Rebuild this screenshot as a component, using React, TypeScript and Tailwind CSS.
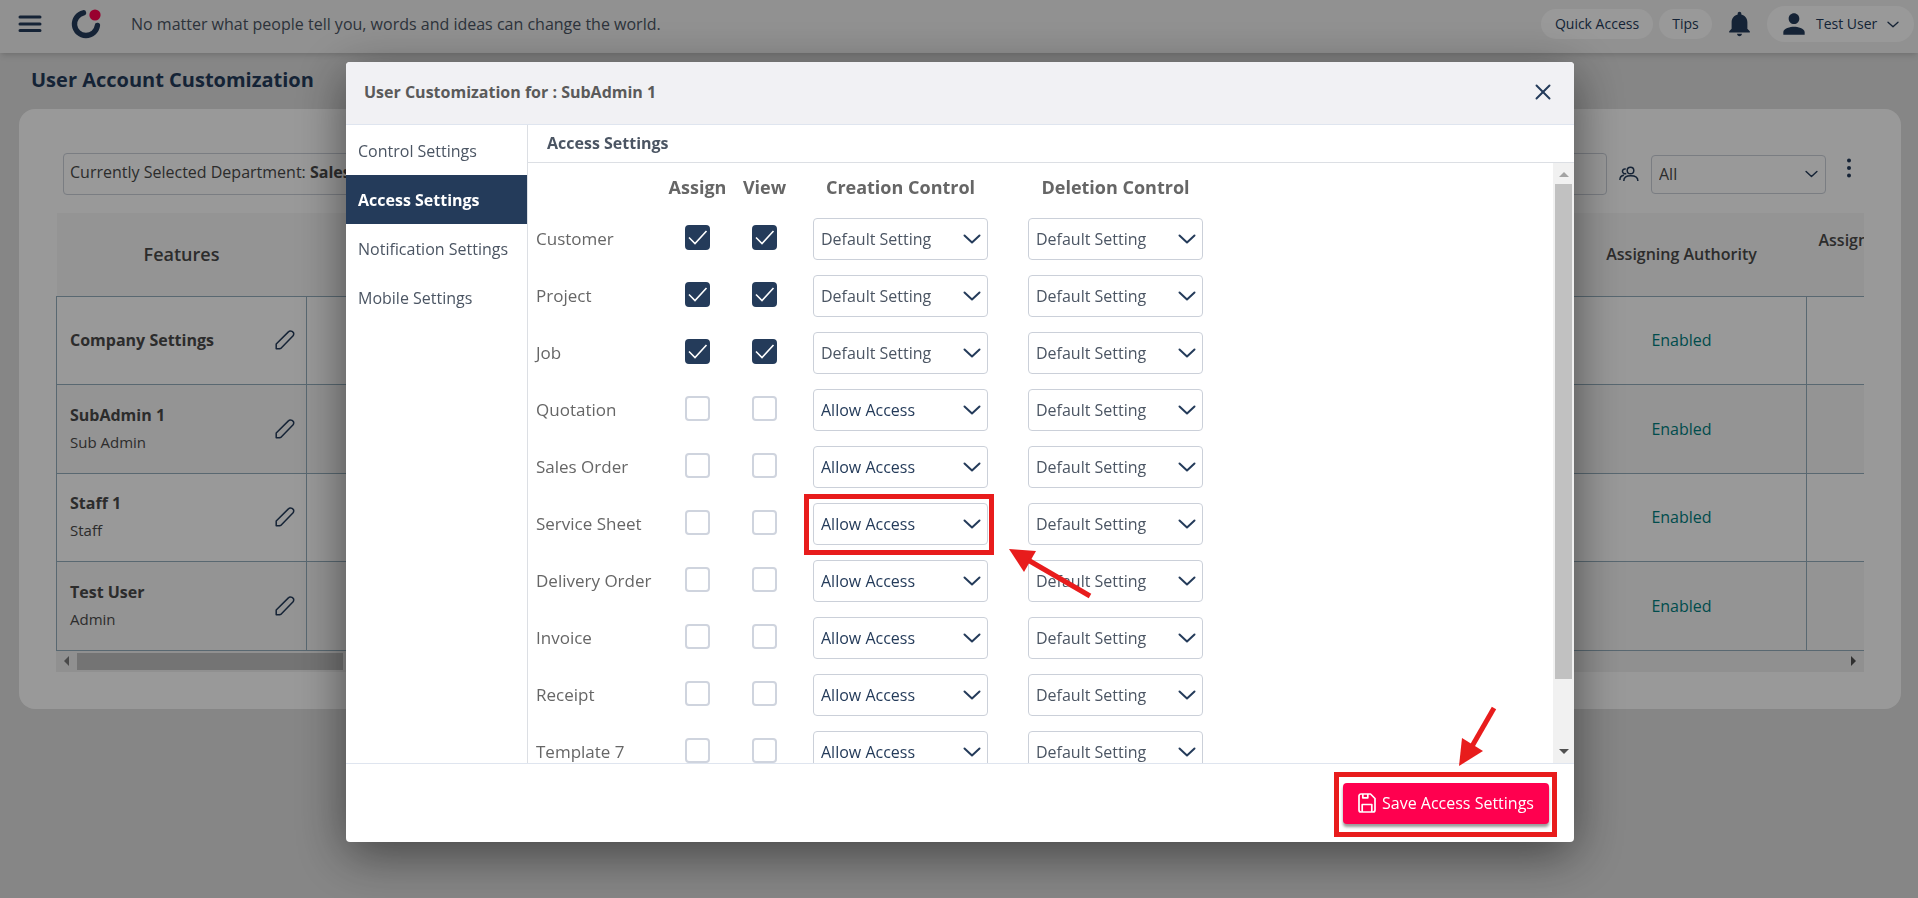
import { useState } from 'react'
import { X } from 'lucide-react'
import { MdPerson } from 'react-icons/md'
import { IoMdNotifications } from 'react-icons/io'

const tabs = ['Control Settings', 'Access Settings', 'Notification Settings', 'Mobile Settings']

const accessRows = [
  { name: 'Customer', on: true, creation: 'Default Setting' },
  { name: 'Project', on: true, creation: 'Default Setting' },
  { name: 'Job', on: true, creation: 'Default Setting' },
  { name: 'Quotation', on: false, creation: 'Allow Access' },
  { name: 'Sales Order', on: false, creation: 'Allow Access' },
  { name: 'Service Sheet', on: false, creation: 'Allow Access', marked: true },
  { name: 'Delivery Order', on: false, creation: 'Allow Access' },
  { name: 'Invoice', on: false, creation: 'Allow Access' },
  { name: 'Receipt', on: false, creation: 'Allow Access' },
  { name: 'Template 7', on: false, creation: 'Allow Access' },
]

const users = [
  { name: 'Company Settings', role: '' },
  { name: 'SubAdmin 1', role: 'Sub Admin' },
  { name: 'Staff 1', role: 'Staff' },
  { name: 'Test User', role: 'Admin' },
]

const spareColumns = [1, 2, 3, 4, 5]

function Chevron({ className }: { className: string }) {
  return (
    <svg viewBox="0 0 18 10" fill="none" stroke="currentColor" strokeWidth="2" strokeLinecap="round" strokeLinejoin="round" className={className}>
      <path d="M1.5 1.5 9 8.5l7.5-7" />
    </svg>
  )
}

function Logo() {
  return (
    <svg viewBox="0 0 30 30" className="h-[30px] w-[30px]">
      <path d="M12.5 3.8A11.5 11.5 0 1 0 26.400 16.500" fill="none" stroke="#243b5a" strokeWidth="5.4" strokeLinecap="round" />
      <circle cx="24" cy="6" r="5.6" fill="#ff004f" />
    </svg>
  )
}

function PencilIcon() {
  return (
    <svg viewBox="0 0 20 20" fill="none" stroke="currentColor" strokeWidth="1.5" strokeLinejoin="round" className="h-5 w-5">
      <path d="M1.200 18.800V14L13.400 1.900a2.600 2.600 0 0 1 1.900-.8c2.700 0 4.400 2.100 2.800 4.700L6 18.200l-1.500.6z" />
    </svg>
  )
}

function AccessSelect({ label, value }: { label: string; value: string }) {
  return (
    <div className="relative mx-auto w-[175px]">
      <select
        aria-label={label}
        defaultValue={value}
        className={`block h-[42px] w-full appearance-none rounded-sm border border-[#cbd0d9] bg-white pl-[7px] text-base ${
          value === 'Allow Access' ? 'text-[#243b5a]' : 'text-[#4b5563]'
        }`}
      >
        <option>Default Setting</option>
        <option>Allow Access</option>
        <option>Deny Access</option>
      </select>
      <Chevron className="pointer-events-none absolute top-4 right-[7px] h-[10px] w-[18px] text-[#243b5a]" />
    </div>
  )
}

function AccessCheck({ label, on }: { label: string; on: boolean }) {
  return (
    <span className="relative mx-auto mb-[2px] block h-[25px] w-[25px]">
      <input
        type="checkbox"
        aria-label={label}
        defaultChecked={on}
        className="peer block h-[25px] w-[25px] appearance-none rounded border-2 border-[#cfd4de] bg-white checked:border-[#243b5a] checked:bg-[#243b5a]"
      />
      <svg
        viewBox="0 0 25 25"
        fill="none"
        stroke="white"
        strokeWidth="1.6"
        className="pointer-events-none absolute inset-0 hidden peer-checked:block"
      >
        <path d="M4 12.5 10 18.5 21.5 6" />
      </svg>
    </span>
  )
}

function TopBar() {
  return (
    <header className="flex h-[53px] items-center bg-[#f2f2f2] pr-1 pb-[5px] pl-[18px] shadow-md">
      <button aria-label="Menu" className="mr-[29px] text-[#243b5a]">
        <svg viewBox="0 0 24 18" className="h-[18px] w-6" stroke="currentColor" strokeWidth="3" strokeLinecap="round">
          <path d="M2 2h20M2 9h20M2 15.500h20" />
        </svg>
      </button>
      <Logo />
      <p className="ml-[30px] text-base text-[#4b5563]">No matter what people tell you, words and ideas can change the world.</p>
      <div className="ml-auto flex items-center text-[#243b5a]">
        <button className="h-[30px] w-28 rounded-full bg-white text-sm">Quick Access</button>
        <button className="ml-[6px] h-[30px] w-[53px] rounded-full bg-white text-sm">Tips</button>
        <button aria-label="Notifications" className="mx-3">
          <IoMdNotifications className="h-[30px] w-[31px]" />
        </button>
        <button className="flex h-9 w-[147px] items-center rounded-full bg-white pl-[11px] text-sm">
          <MdPerson className="h-8 w-8" />
          <span className="ml-[6px]">Test User</span>
          <Chevron className="ml-[10px] h-[7px] w-3" />
        </button>
      </div>
    </header>
  )
}

function UsersTable() {
  return (
    <div className="overflow-hidden">
      <table className="w-[2001px] table-fixed border-collapse text-[#4a4a4a]">
        <thead>
          <tr className="h-[83px] border-b border-[#e8eaec] bg-[#f7f7f7]">
            <th className="text-lg font-semibold">Features</th>
            {spareColumns.map((c) => (
              <th key={c} />
            ))}
            <th className="font-semibold">Assigning Authority</th>
            <th className="pb-[28px] pl-3 text-left font-semibold">Assigning</th>
          </tr>
        </thead>
        <tbody>
          {users.map((u) => (
            <tr key={u.name} className="h-[88px] even:h-[89px] even:bg-[#f7f7f7]">
              <td className="border border-[#94aebd]">
                <div className="flex items-center justify-between pr-[11px] pl-[13px]">
                  <div className="leading-[27px]">
                    <div className="font-bold">{u.name}</div>
                    {u.role && <div className="text-[15px]">{u.role}</div>}
                  </div>
                  <button aria-label={`Edit ${u.name}`} className="text-[#243b5a]">
                    <PencilIcon />
                  </button>
                </div>
              </td>
              {spareColumns.map((c) => (
                <td key={c} className="border border-[#94aebd]" />
              ))}
              <td className="border border-[#94aebd] text-center text-[#008080]">Enabled</td>
              <td className="border border-[#94aebd]" />
            </tr>
          ))}
        </tbody>
      </table>
      <div className="flex h-[21px] items-center bg-[#f1f1f1] px-2">
        <span className="border-y-[5px] border-r-[5px] border-y-transparent border-r-[#7c7c7c]" />
        <span className="ml-2 h-[17px] w-[266px] bg-[#c1c1c1]" />
        <span className="ml-auto border-y-[5px] border-l-[5px] border-y-transparent border-l-[#505050]" />
      </div>
    </div>
  )
}

function AccountPage() {
  return (
    <main className="pr-[17px] pl-[19px]">
      <h1 className="pt-[13px] pl-3 text-xl leading-7 font-bold text-[#243b5a]">User Account Customization</h1>
      <section className="mt-[15px] rounded-2xl bg-white px-[37px] pt-11 pb-[37px]">
        <div className="mb-[18px] flex items-center pl-[7px]">
          <p className="h-[42px] flex-1 rounded border border-[#cbd0d9] pl-[6px] leading-9 text-[#4a4a4a]">
            Currently Selected Department: <b>Sales</b>
          </p>
          <svg viewBox="0 0 20 16" fill="none" stroke="#243b5a" strokeWidth="1.5" className="mr-3 ml-3 h-4 w-5">
            <circle cx="11.5" cy="4.500" r="3.300" />
            <path d="M4.800 15c0-3.200 2.200-5.200 6.900-5.200s7.200 2 7.200 5.200M6.800 3.100A2.400 2.400 0 1 0 7.200 7.300M.9 14c0-2.600 1.200-4.400 4-4.700" />
          </svg>
          <div className="relative w-[175px]">
            <select aria-label="Department filter" className="block h-[39px] w-full appearance-none rounded border border-[#cbd0d9] pl-[7px] text-[#4a4a4a]">
              <option>All</option>
            </select>
            <Chevron className="pointer-events-none absolute top-[15px] right-2 h-2 w-[13px] text-[#243b5a]" />
          </div>
          <button aria-label="More" className="mr-3 ml-5 pb-3 text-[#243b5a]">
            <svg viewBox="0 0 6 20" fill="currentColor" className="h-5 w-[6px]">
              <circle cx="3" cy="2.500" r="2" />
              <circle cx="3" cy="10" r="2" />
              <circle cx="3" cy="17.500" r="2" />
            </svg>
          </button>
        </div>
        <UsersTable />
      </section>
    </main>
  )
}

function AccessTable() {
  return (
    <table className="w-[700px] table-fixed text-[#666]">
      <colgroup>
        <col className="w-[136px]" />
        <col className="w-[67px]" />
        <col className="w-[67px]" />
        <col className="w-[205px]" />
        <col className="w-[225px]" />
      </colgroup>
      <thead>
        <tr className="h-[47px] text-lg">
          <td />
          <th>Assign</th>
          <th>View</th>
          <th>Creation Control</th>
          <th>Deletion Control</th>
        </tr>
      </thead>
      <tbody>
        {accessRows.map((r) => (
          <tr key={r.name} className="h-[57px]">
            <th scope="row" className="pl-2 text-left text-[17px] font-normal whitespace-nowrap">{r.name}</th>
            <td><AccessCheck label={`Assign ${r.name}`} on={r.on} /></td>
            <td><AccessCheck label={`View ${r.name}`} on={r.on} /></td>
            <td className="relative">
              <AccessSelect label={`${r.name} creation control`} value={r.creation} />
              {r.marked && (
                <>
                  <span className="pointer-events-none absolute top-[-1px] left-[6px] h-[61px] w-[190px] border-[5px] border-[#e81c1c]" />
                  <svg viewBox="0 0 84 50" fill="#e81c1c" className="pointer-events-none absolute top-[54px] left-[210px] z-10 h-[50px] w-[84px]">
                    <path d="M1 0 28 2 16 23z" />
                    <path d="M20 11 82 47" stroke="#e81c1c" strokeWidth="5" />
                  </svg>
                </>
              )}
            </td>
            <td><AccessSelect label={`${r.name} deletion control`} value="Default Setting" /></td>
          </tr>
        ))}
      </tbody>
    </table>
  )
}

function CustomizationDialog() {
  const [tab, setTab] = useState('Access Settings')

  return (
    <div role="dialog" aria-label="User Customization" className="flex h-full w-full max-w-[1228px] flex-col rounded bg-white shadow-[0_12px_50px_rgba(0,0,0,0.5)]">
      <div className="flex h-[63px] shrink-0 items-center justify-between rounded-t border-b border-[#dfe5ef] bg-[#f1f1f4] pr-[18px] pb-[2px] pl-[18px]">
        <h2 className="font-bold text-[#5a5a5a]">User Customization for : SubAdmin 1</h2>
        <button aria-label="Close" className="text-[#243b5a]">
          <X size={26} strokeWidth={1.8} />
        </button>
      </div>

      <div className="flex min-h-0 flex-1">
        <nav className="flex w-[182px] shrink-0 flex-col border-r border-[#dcdfe4] pt-px">
          {tabs.map((t) => (
            <button
              key={t}
              onClick={() => setTab(t)}
              className={`h-[49px] pl-3 text-left text-base whitespace-nowrap ${
                t === tab ? 'bg-[#243b5a] font-bold text-white' : 'text-[#4b5563]'
              }`}
            >
              {t}
            </button>
          ))}
        </nav>

        <div className="flex min-w-0 flex-1 flex-col">
          <h3 className="h-[38px] shrink-0 border-b border-[#dcdfe4] pl-[19px] leading-9 font-bold text-[#4b5563]">Access Settings</h3>
          <div className="flex min-h-0 flex-1">
            <div className="flex-1 overflow-y-auto pb-14 [scrollbar-width:none]">
              <AccessTable />
            </div>
            {/* scrollbar */}
            <div className="flex w-[21px] flex-col items-center bg-[#f1f1f1] py-[9px]">
              <span className="border-x-[5px] border-b-[5px] border-x-transparent border-b-[#a3a3a3]" />
              <span className="mt-[7px] h-[495px] w-[17px] bg-[#c1c1c1]" />
              <span className="mt-auto border-x-[5px] border-t-[5px] border-x-transparent border-t-[#505050]" />
            </div>
          </div>
        </div>
      </div>

      <div className="relative flex h-[79px] shrink-0 items-start justify-end border-t border-[#dfe5ef] pt-[19px] pr-[25px]">
        <button className="flex h-[41px] w-[206px] items-center justify-center gap-[6px] rounded bg-[#ff004f] pb-[2px] text-base font-medium whitespace-nowrap text-white shadow-[0_3px_3px_rgba(0,0,0,0.4)]">
          <svg viewBox="0 0 18 20" fill="none" stroke="currentColor" strokeWidth="1.7" strokeLinejoin="round" className="h-5 w-[18px] shrink-0">
            <path d="M1 3a2 2 0 0 1 2-2h9.500L17 5.500V17a2 2 0 0 1-2 2H3a2 2 0 0 1-2-2zM4.200 19v-7.500h9.600V19M4.800 1v3.800h5V1" />
          </svg>
          Save Access Settings
        </button>
        <span className="pointer-events-none absolute top-2 right-[17px] h-[65px] w-[223px] border-[5px] border-[#e81c1c]" />
        <svg viewBox="0 0 40 60" fill="#e81c1c" className="pointer-events-none absolute top-[-58px] right-[77px] h-[60px] w-10">
          <path d="M2 60 5 32l21 13z" />
          <path d="M14 42 37 2" stroke="#e81c1c" strokeWidth="5" />
        </svg>
      </div>
    </div>
  )
}

export default function App() {
  return (
    <div className="min-h-screen bg-[#dfdfdf] font-['Open_Sans',sans-serif] text-base">
      <TopBar />
      <AccountPage />
      <div className="fixed inset-0 flex justify-center bg-black/40 pt-[62px] pb-14 pl-[2px]">
        <CustomizationDialog />
      </div>
    </div>
  )
}
